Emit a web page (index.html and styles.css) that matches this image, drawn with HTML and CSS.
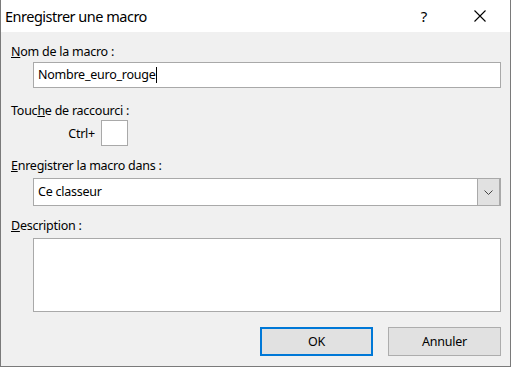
FILE: index.html
```html
<!DOCTYPE html>
<html lang="fr">
<head>
    <meta charset="UTF-8">
    <title>Enregistrer une macro</title>
    <link rel="stylesheet" href="styles.css">
</head>
<body>
    <div class="window">
        <div class="titlebar">
            <span class="title">Enregistrer une macro</span>
            <span class="help">?</span>
            <span class="close">
                <svg width="12" height="12" viewBox="0 0 12 12">
                    <path d="M0.5 0.5 L11.5 11.5 M11.5 0.5 L0.5 11.5" stroke="#000" stroke-width="1.1" fill="none"/>
                </svg>
            </span>
        </div>

        <div class="content">
            <div class="label label-first"><u>N</u>om de la macro :</div>
            <div class="field name-field">Nombre_euro_rouge<span class="caret"></span></div>

            <div class="label label-gap">Touc<u>h</u>e de raccourci :</div>
            <div class="shortcut">
                <span class="ctrl">Ctrl+</span>
                <span class="key-box"></span>
            </div>

            <div class="label label-after-box"><u>E</u>nregistrer la macro dans :</div>
            <div class="combo">
                <span class="combo-text">Ce classeur</span>
                <span class="combo-btn">
                    <svg width="9" height="5" viewBox="0 0 9 5">
                        <path d="M0.5 0.5 L4.5 4.5 L8.5 0.5" stroke="#444" stroke-width="1" fill="none"/>
                    </svg>
                </span>
            </div>

            <div class="label label-after-box"><u>D</u>escription :</div>
            <div class="field desc-field"></div>

            <div class="buttons">
                <button class="button default">OK</button>
                <button class="button">Annuler</button>
            </div>
        </div>
    </div>
</body>
</html>
```

FILE: styles.css
```css
body {
    margin: 0;
    font-family: "Noto Sans", "Open Sans", sans-serif;
    font-size: 12.5px;
    letter-spacing: -0.25px;
    color: #000;
    background: #fff;
}

.window {
    width: 511px;
    height: 367px;
    box-sizing: border-box;
    border: 1px solid #7a7a7a;
    border-top: none;
    background: #f0f0f0;
}

.titlebar {
    height: 32px;
    background: #fff;
    display: flex;
    align-items: center;
    padding-left: 4px;
    padding-right: 24px;
}

.title {
    font-size: 14.5px;
    letter-spacing: -0.5px;
    flex: 1;
    margin-top: -1px;
}

.help {
    font-size: 15px;
    margin-right: 47px;
    margin-top: -1px;
}

.close {
    display: flex;
}

.content {
    padding: 12px 9px 0 10px;
}

.label {
    height: 16px;
    line-height: 16px;
}

.label-gap {
    margin-top: 15px;
}

.label-after-box {
    margin-top: 12px;
}

.field {
    margin-left: 22px;
    background: #fff;
    border: 1px solid #a9a9a9;
    box-sizing: border-box;
}

.name-field {
    height: 26px;
    margin-top: 2px;
    line-height: 24px;
    padding-left: 4px;
}

.caret {
    display: inline-block;
    width: 1px;
    height: 16px;
    background: #000;
    vertical-align: -4px;
    margin-left: 1px;
}

.shortcut {
    display: flex;
    align-items: center;
    margin-left: 57px;
    margin-top: 1px;
    gap: 6px;
}

.ctrl {
    width: 27px;
    text-align: right;
}

.key-box {
    width: 27px;
    height: 26px;
    box-sizing: border-box;
    background: #fff;
    border: 1px solid #a9a9a9;
}

.combo {
    margin-left: 22px;
    margin-top: 4px;
    height: 28px;
    box-sizing: border-box;
    border: 1px solid #a9a9a9;
    background: #fff;
    display: flex;
}

.combo-text {
    flex: 1;
    line-height: 26px;
    padding-left: 4px;
}

.combo-btn {
    width: 21px;
    background: #e1e1e1;
    border-left: 1px solid #a9a9a9;
    border-right: 1px solid #a9a9a9;
    display: flex;
    align-items: center;
    justify-content: center;
}

.desc-field {
    height: 74px;
    margin-top: 4px;
}

.buttons {
    display: flex;
    justify-content: flex-end;
    gap: 15px;
    margin-top: 15px;
}

.button {
    width: 113px;
    height: 29px;
    box-sizing: border-box;
    background: #e1e1e1;
    border: 1px solid #adadad;
    font-family: inherit;
    font-size: 12.5px;
    letter-spacing: -0.25px;
    color: #000;
    padding: 0;
}

.default {
    border: 2px solid #0078d7;
}
```
